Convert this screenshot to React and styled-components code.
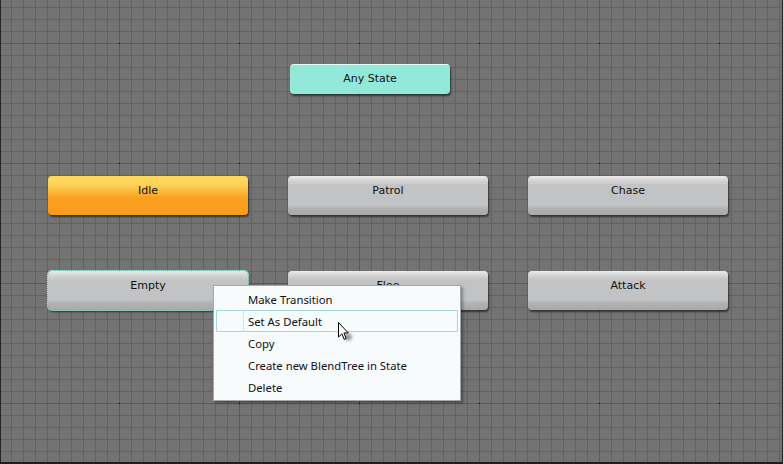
import styled, { createGlobalStyle, css } from 'styled-components';

const GlobalStyle = createGlobalStyle`
  html, body {
    margin: 0;
    padding: 0;
    background: #1c1c1c;
  }
`;

//! Canvas
const Canvas = styled.div`
  position: relative;
  box-sizing: border-box;
  width: 783px;
  height: 464px;
  overflow: hidden;
  display: flex;
  flex-direction: column;
  align-items: flex-start;
  gap: 82px;
  padding: 64px 0 0 47px;
  border-left: 1px solid #242424;
  border-right: 1px solid #242424;
  border-bottom: 2px solid #1e1e1e;
  background-color: #737373;
  background-image:
    radial-gradient(circle at 0.5px 0.5px, #000 0.9px, transparent 1px),
    linear-gradient(to right, #5b5b5b 1px, transparent 1px),
    linear-gradient(to bottom, #5b5b5b 1px, transparent 1px),
    linear-gradient(to right, #626262 1px, transparent 1px),
    linear-gradient(to bottom, #626262 1px, transparent 1px);
  background-size: 120px 120px, 120px 120px, 120px 120px, 12px 12px, 12px 12px;
  background-position: 118px 43px, 118px 0, 0 43px, 10px 0, 0 7px;
`;

const AnyRow = styled.div`
  padding-left: 242px;
`;

const NodeGrid = styled.div`
  display: grid;
  grid-template-columns: repeat(3, 200px);
  column-gap: 40px;
  row-gap: 56px;
`;

const grey = css`
  background: linear-gradient(
    to bottom,
    #ececec 0,
    #d6d6d6 4px,
    #c2c3c5 9px,
    #c2c3c5 calc(100% - 10px),
    #b0b0b0 calc(100% - 6px),
    #a9a9a9 100%
  );
`;

const orange = css`
  background: linear-gradient(
    to bottom,
    #fed95e 0,
    #fdd45a 8px,
    #fbb83a 16px,
    #fa9f1e 22px,
    #f99c1b 100%
  );
`;

const teal = css`
  background: #92e8d9;
  border-top: 1px solid #e6fffa;
`;

const Node = styled.div`
  box-sizing: border-box;
  width: ${(p) => p.$w || 200}px;
  height: ${(p) => p.$h || 39}px;
  border-radius: 4px;
  padding-top: ${(p) => p.$pt || 8}px;
  font-family: 'DejaVu Sans', Verdana, sans-serif;
  font-size: 11px;
  line-height: 14px;
  color: #111;
  text-align: center;
  box-shadow: 1px 2px 2px rgba(0, 0, 0, 0.55);
  ${(p) => (p.$kind === 'orange' ? orange : p.$kind === 'teal' ? teal : grey)}
  ${(p) =>
    p.$selected &&
    css`
      outline: 1px dotted #8ff0dc;
      outline-offset: 0;
      box-shadow: 0 0 0 1px rgba(143, 240, 220, 0.5), 1px 2px 2px rgba(0, 0, 0, 0.55);
    `}
`;

//! Menu
const Menu = styled.div`
  position: absolute;
  left: 212px;
  top: 285px;
  box-sizing: border-box;
  width: 248px;
  padding: 2px;
  display: flex;
  flex-direction: column;
  background: #f7fbfc;
  border: 1px solid #a5a7a8;
  box-shadow: 2px 2px 3px rgba(0, 0, 0, 0.35);
`;

const Item = styled.div`
  box-sizing: border-box;
  height: 22px;
  display: flex;
  align-items: center;
  padding-left: 32px;
  font-family: 'Noto Sans', 'Open Sans', sans-serif;
  font-size: 11.3px;
  color: #111;
  position: relative;
  ${(p) =>
    p.$hover &&
    css`
      border: 1px solid #a6d9da;
      background: #f6fcfc;
      padding-left: 31px;
      &::before {
        content: '';
        position: absolute;
        left: 26px;
        top: 0;
        bottom: 0;
        border-left: 1px dotted #9fdcdc;
      }
    `}
`;

const Cursor = styled.svg`
  position: absolute;
  left: 335px;
  top: 321px;
`;

const Pointer = () => (
  <Cursor width="22" height="26" viewBox="0 0 22 26">
    <defs>
      <filter id="blur" x="-50%" y="-50%" width="200%" height="200%">
        <feGaussianBlur stdDeviation="1.4" />
      </filter>
    </defs>
    <ellipse cx="12" cy="16" rx="4" ry="3.5" fill="#9a9a9a" filter="url(#blur)" />
    <path
      d="M2.5 1.5 L2.5 16 L5.8 12.8 L8.2 18.3 L10.2 17.4 L7.9 12 L12.3 12 Z"
      fill="#fff"
      stroke="#000"
      strokeWidth="1"
    />
  </Cursor>
);

const states = [
  { label: 'Idle', kind: 'orange' },
  { label: 'Patrol' },
  { label: 'Chase' },
  { label: 'Empty', selected: true },
  { label: 'Flee' },
  { label: 'Attack' },
];

const menuItems = [
  'Make Transition',
  'Set As Default',
  'Copy',
  'Create new BlendTree in State',
  'Delete',
];

const App = () => {
  return (
    <>
      <GlobalStyle />
      <Canvas>
        <AnyRow>
          <Node $kind="teal" $w={160} $h={30} $pt={7}>
            Any State
          </Node>
        </AnyRow>
        <NodeGrid>
          {states.map((s) => (
            <Node key={s.label} $kind={s.kind} $selected={s.selected}>
              {s.label}
            </Node>
          ))}
        </NodeGrid>
        <Menu>
          {menuItems.map((m, i) => (
            <Item key={m} $hover={i === 1}>
              {m}
            </Item>
          ))}
        </Menu>
        <Pointer />
      </Canvas>
    </>
  );
};

export default App;
